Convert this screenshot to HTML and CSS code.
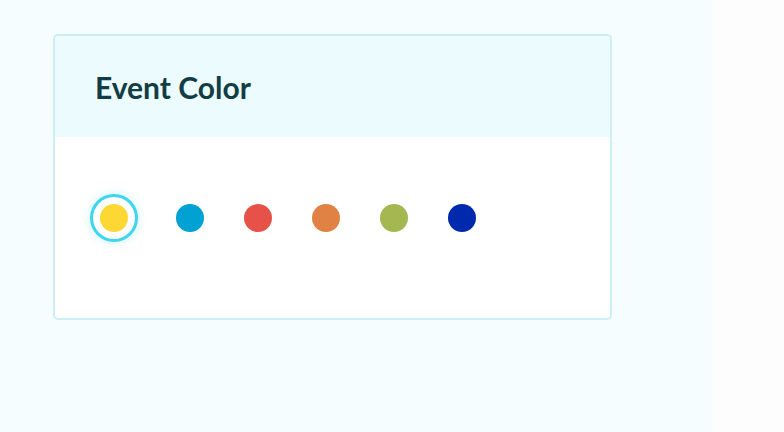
FILE: index.html
```html
<!DOCTYPE html>
<html lang="en">
<head>
    <meta charset="UTF-8">
    <meta name="viewport" content="width=device-width, initial-scale=1.0">
    <title>Event Color</title>
    <link rel="stylesheet" href="styles.css">
</head>
<body>
    <div class="page">
        <section class="card">
            <header class="card-header">
                <h2>Event Color</h2>
            </header>
            <div class="card-body">
                <div class="swatches">
                    <button class="swatch selected" style="background: #fdd835;" aria-label="Yellow"></button>
                    <button class="swatch" style="background: #00a1d3;" aria-label="Blue"></button>
                    <button class="swatch" style="background: #e65248;" aria-label="Red"></button>
                    <button class="swatch" style="background: #e08243;" aria-label="Orange"></button>
                    <button class="swatch" style="background: #a4b750;" aria-label="Green"></button>
                    <button class="swatch" style="background: #002aad;" aria-label="Navy"></button>
                </div>
            </div>
        </section>
    </div>
</body>
</html>
```

FILE: styles.css
```css
body {
    margin: 0;
    font-family: 'Lato', sans-serif;
    background: #fdfdfd;
    color: #133d44;
}

.page {
    width: 712px;
    height: 432px;
    background: #f5fdff;
    padding: 34px 0 0 53px;
    box-sizing: border-box;
}

.card {
    width: 559px;
    background: #fff;
    border: 2px solid #cdeef5;
    border-radius: 5px;
    box-sizing: border-box;
    overflow: hidden;
}

.card-header {
    height: 101px;
    background: #ebfbfe;
    display: flex;
    align-items: center;
    padding: 0 40px;
}

.card-header h2 {
    margin: 0;
    font-size: 30px;
    font-weight: 700;
    color: #133d44;
}

.card-body {
    height: 181px;
    padding: 67px 0 0 45px;
    box-sizing: border-box;
}

.swatches {
    display: flex;
    align-items: center;
    gap: 40px;
}

.swatch {
    width: 28px;
    height: 28px;
    padding: 0;
    border: none;
    border-radius: 50%;
    cursor: pointer;
    flex-shrink: 0;
}

.swatch.selected {
    margin: 0 8px 0 0;
    box-shadow: 0 0 0 7px #fff, 0 0 0 10px #3dd5ef, 0 0 8px 10px rgba(61, 213, 239, 0.3);
}
```
